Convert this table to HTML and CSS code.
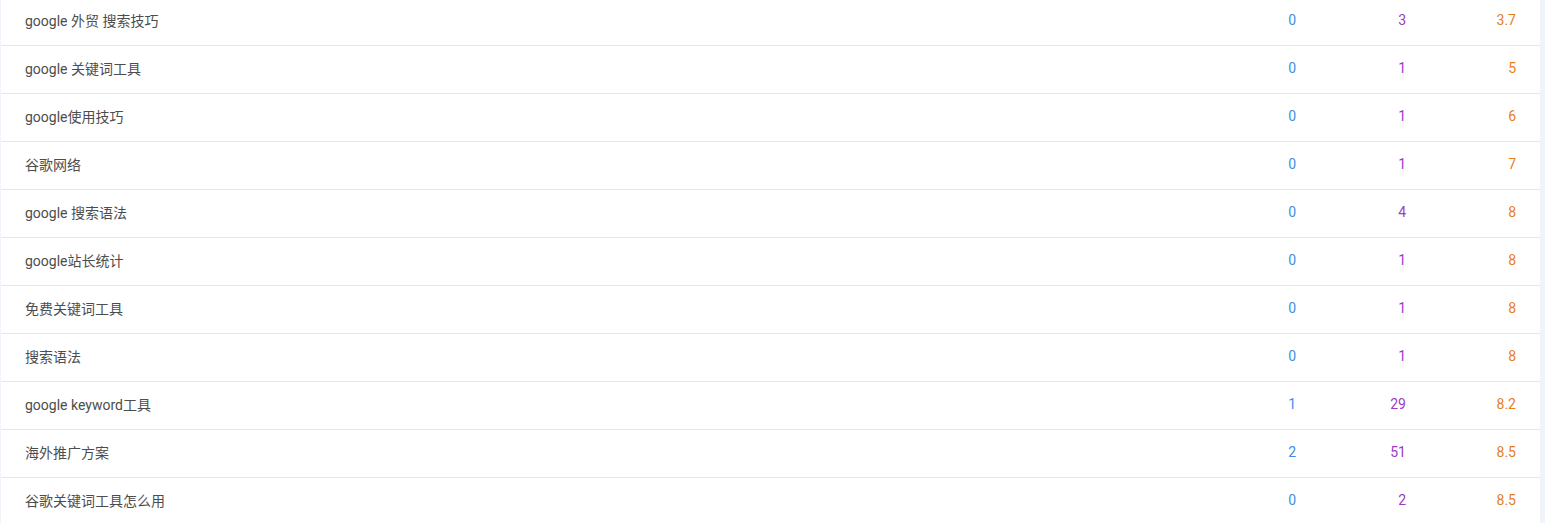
FILE: index.html
```html
<!DOCTYPE html>
<html lang="zh-CN">
<head>
<meta charset="utf-8">
<title>关键词</title>
<link rel="stylesheet" href="styles.css">
</head>
<body>
<div class="table">
  <div class="row"><div class="kw">google 外贸 搜索技巧</div><div class="n a">0</div><div class="n b">3</div><div class="n c">3.7</div></div>
  <div class="row"><div class="kw">google 关键词工具</div><div class="n a">0</div><div class="n b">1</div><div class="n c">5</div></div>
  <div class="row"><div class="kw">google使用技巧</div><div class="n a">0</div><div class="n b">1</div><div class="n c">6</div></div>
  <div class="row"><div class="kw">谷歌网络</div><div class="n a">0</div><div class="n b">1</div><div class="n c">7</div></div>
  <div class="row"><div class="kw">google 搜索语法</div><div class="n a">0</div><div class="n b">4</div><div class="n c">8</div></div>
  <div class="row"><div class="kw">google站长统计</div><div class="n a">0</div><div class="n b">1</div><div class="n c">8</div></div>
  <div class="row"><div class="kw">免费关键词工具</div><div class="n a">0</div><div class="n b">1</div><div class="n c">8</div></div>
  <div class="row"><div class="kw">搜索语法</div><div class="n a">0</div><div class="n b">1</div><div class="n c">8</div></div>
  <div class="row"><div class="kw">google keyword工具</div><div class="n a">1</div><div class="n b">29</div><div class="n c">8.2</div></div>
  <div class="row"><div class="kw">海外推广方案</div><div class="n a">2</div><div class="n b">51</div><div class="n c">8.5</div></div>
  <div class="row"><div class="kw">谷歌关键词工具怎么用</div><div class="n a">0</div><div class="n b">2</div><div class="n c">8.5</div></div>
</div>
</body>
</html>
```
FILE: styles.css
```css
html, body {
  margin: 0;
  padding: 0;
}
body {
  background: #f0f3fa;
  font-family: Roboto, "Noto Sans CJK SC", sans-serif;
  font-size: 14px;
  overflow: hidden;
}
.table {
  background: #fff;
  margin: -2px 5px 0 1px;
}
.row {
  display: grid;
  grid-template-columns: 1fr 110px 110px 110px;
  align-items: center;
  height: 43px;
  padding-bottom: 4px;
  border-bottom: 1px solid #e4e6ea;
}
.kw {
  padding-left: 24px;
  color: #4d4d4d;
}
.n {
  text-align: right;
  padding-right: 24px;
}
.n.a { color: #3b8fe6; }
.n.b { color: #9b3bc4; }
.n.c { color: #e67e1e; }
```
